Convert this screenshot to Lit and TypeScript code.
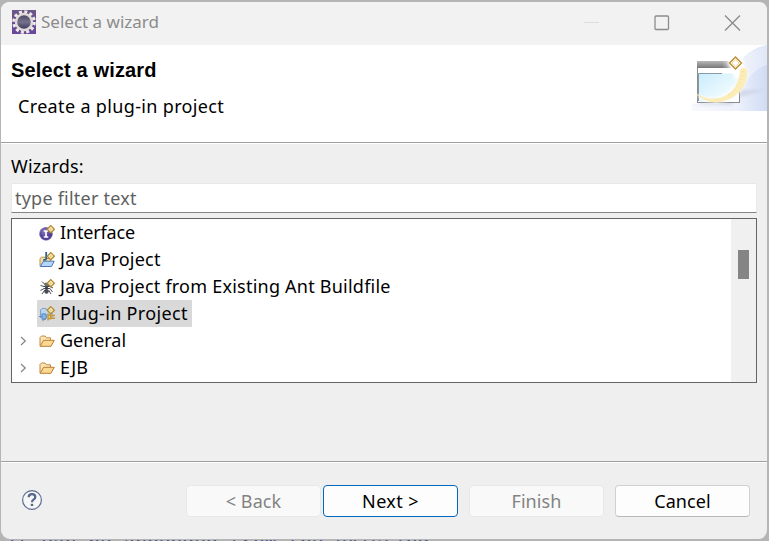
import { LitElement, html, css, svg } from "lit";
import { customElement, property } from "lit/decorators.js";

const sparkle = svg`<path d="M11.8 .6 L15.4 4.2 L11.8 7.8 L8.2 4.2Z" fill="#fffbe6" stroke="#b3892b" stroke-width="1.3"/><path d="M11.8 2.4V6M10 4.2H13.6" stroke="#e2c36c" stroke-width=".8"/>`;

const icons: Record<string, unknown> = {
  interface: svg`<defs><radialGradient id="g" cx=".4" cy=".3"><stop offset="0" stop-color="#8d7cc4"/><stop offset="1" stop-color="#4f3d94"/></radialGradient></defs>
    <circle cx="7" cy="8.8" r="6.4" fill="url(#g)" stroke="#6152a0" stroke-width=".6"/><path d="M4.7 6H9.3M7 6V12M4.7 12H9.3" stroke="#fff" stroke-width="1.7" fill="none"/>${sparkle}`,
  java: svg`<path d="M1 14V6.5L2.5 5.2H6L7 6.5H11.5V9" fill="#f5dfa3" stroke="#b7904a"/><path d="M1.2 14.5L4.5 9.2H15.2L12.5 14.5Z" fill="#b5d6fa" stroke="#4a76b8"/><path d="M7.2 0V6.5Q7 8.3 4.2 7.8" fill="none" stroke="#2b6094" stroke-width="1.8"/>${sparkle}`,
  ant: svg`<g stroke="#4b4e55" stroke-width="1" fill="none"><path d="M3 2.5L5.5 5L7 6M10 6L9 7M1.5 6.5L5 7.5H11L14 9M1.5 11.5L5 9.5H11L13.5 13M3 15L6 11M12 15L9.5 11"/></g><circle cx="7.3" cy="5.5" r="2" fill="#6a6e78"/><ellipse cx="7.5" cy="8.8" rx="1.5" ry="1.6" fill="#3b3e45"/><ellipse cx="7.5" cy="12.2" rx="2.2" ry="2.5" fill="#4a4d55"/>${sparkle}`,
  plugin: svg`<path d="M1.5 12V4L3 2.5H7L8 4H13V12" fill="#b9d5ef" stroke="#7aa2cb"/><path d="M0 10.5H3M3 8Q7.4 7 7.4 10.5T3 13Z" stroke="#5c8fc8" stroke-width="1.2" fill="#8db8e4"/><path d="M3.5 14.8L7 12.5" fill="none" stroke="#5b87bb"/><path d="M9 7.5V14.5M9 9H11.5V12.7H9M11 9.5H16M11 12.3H16" stroke="#c79835" stroke-width="1.4" fill="#f4cf74"/>${sparkle}`,
  folder: svg`<path d="M1 13V4.5L2.5 3H6L7.5 4.8H11.5V7.2" fill="#fbe5b5" stroke="#c28a3d"/><path d="M1.2 13.3L4.6 7.3H15.3L12 13.3Z" fill="#fbd993" stroke="#b97d35" stroke-linejoin="round"/>`,
};

interface Item {
  label: string;
  icon: string;
  tracking: number;
  selected?: boolean;
  expandable?: boolean;
}

const items: Item[] = [
  { label: "Interface", icon: "interface", tracking: -0.15 },
  { label: "Java Project", icon: "java", tracking: 0.25 },
  { label: "Java Project from Existing Ant Buildfile", icon: "ant", tracking: 0.23 },
  { label: "Plug-in Project", icon: "plugin", tracking: 0.33, selected: true },
  { label: "General", icon: "folder", tracking: -0.05, expandable: true },
  { label: "EJB", icon: "folder", tracking: 0.1, expandable: true },
];

@customElement("wizard-row")
class WizardRow extends LitElement {
  @property({ attribute: false }) item!: Item;
  static styles = css`
    :host { display: flex; height: 27px; align-items: center; }
    .arrow { width: 25px; display: flex; justify-content: center; box-sizing: border-box; padding-right: 3px; }
    .cell { display: flex; align-items: center; height: 27px; padding: 0 4px 0 2px; border-radius: 1px; }
    .on { background: #d9d9d9; }
    .icon { width: 16px; height: 16px; margin-right: 5px; }
    .label { white-space: pre; line-height: 27px; }
  `;
  render() {
    const it = this.item;
    return html`<div class="arrow">${it.expandable
        ? html`<svg width="7" height="10" viewBox="0 0 7 10"><path d="M1 1L5.3 5L1 9" fill="none" stroke="#858585" stroke-width="1.2"/></svg>`
        : ""}</div>
      <div class="cell ${it.selected ? "on" : ""}">
        <svg class="icon" viewBox="0 0 16 16">${icons[it.icon]}</svg><span class="label" style="letter-spacing:${it.tracking}px">${it.label}</span>
      </div>`;
  }
}

@customElement("app-root")
class AppRoot extends LitElement {
  static styles = css`
    :host { display: block; position: relative; width: 769px; height: 541px; overflow: hidden; background: #b4b4b4;
      font-family: "Noto Sans", "Open Sans", sans-serif; font-size: 18px; color: #000; }
    .code { position: absolute; left: 6px; top: 533px; font: 19.6px/22px "Liberation Mono", monospace; white-space: pre; color: #4b5790; }
    .window { position: relative; box-sizing: border-box; width: 769px; height: 540px; display: flex; flex-direction: column;
      border: solid #b5b5b5; border-width: 2px 2px 1px 1px; border-radius: 10px; overflow: hidden; background: #efefef; }
    .bar { height: 43px; background: #f2f2f2; display: flex; align-items: center; box-sizing: border-box; padding: 0 26px 3px 11px; flex: none; color: #8c8c8c; }
    .logo { width: 24px; height: 24px; margin-right: 5px; }
    .caption { flex: 1; font-size: 17px; line-height: 24px; }
    .controls { display: flex; gap: 54px; align-items: center; padding-top: 1px; }
    .head { height: 97px; background: #fff; display: flex; justify-content: space-between; flex: none; }
    .titles { display: flex; flex-direction: column; padding: 13px 0 0 10px; }
    .title { font: bold 20px/24px "Liberation Sans", sans-serif; letter-spacing: .15px; }
    .sub { line-height: 26px; padding: 11px 0 0 7px; letter-spacing: .34px; }
    .rule { height: 1px; background: #a0a0a0; border-bottom: 1px solid #fff; flex: none; }
    .body { flex: 1; padding: 9px 10px 0; display: flex; flex-direction: column; }
    .name { line-height: 26px; height: 26px; letter-spacing: .15px; }
    .filter { box-sizing: border-box; height: 30px; margin: 4px 0 0; background: #fff; border: 1px solid #e8e8e8; border-bottom-color: #858585;
      padding-left: 3px; color: #5f5f5f; line-height: 28px; letter-spacing: .22px; }
    .list { box-sizing: border-box; margin-top: 5px; height: 165px; border: 1px solid #646464; background: #fff; display: flex; }
    .rows { flex: 1; }
    .track { width: 25px; background: #f0f0f0; box-sizing: border-box; padding: 31px 0 0 7px; }
    .thumb { width: 11px; height: 29px; background: #858585; }
    .foot { height: 76px; flex: none; display: flex; align-items: center; box-sizing: border-box; padding: 0 17px 0 20px; }
    .help { flex: 1; height: 24px; }
    .btn { box-sizing: border-box; width: 135px; height: 32px; border: 1px solid #d0d0d0; border-bottom-color: #b8b8b8; border-radius: 4px; background: #fdfdfd;
      text-align: center; line-height: 30px; margin-left: 11px; letter-spacing: .1px; }
    .btn.near { margin-left: 2px; letter-spacing: .4px; }
    .off { color: #838383; background: #f9f9f9; border-color: #e8e8e8; }
    .main { border-color: #0067c0; }
  `;
  render() {
    return html`
      <div class="code">it can be appended from the existing</div>
      <div class="window">
        <div class="bar">
          <svg class="logo" viewBox="0 0 24 24"><defs><linearGradient id="a" x2="0" y2="1"><stop stop-color="#6b5787"/><stop offset="1" stop-color="#68489a"/></linearGradient><linearGradient id="b" x2="0" y2="1"><stop stop-color="#45405d"/><stop offset=".5" stop-color="#76728d"/><stop offset="1" stop-color="#3b3158"/></linearGradient></defs>
            <rect width="24" height="24" fill="url(#a)"/><circle cx="12" cy="12" r="10.2" fill="none" stroke="#eeeae8" stroke-width="3.2" stroke-dasharray="3 2.341"/><circle cx="12" cy="12" r="8" fill="url(#b)" stroke="#dedbd8" stroke-width="2.4"/></svg>
          <span class="caption">Select a wizard</span>
          <div class="controls">
            <svg width="16" height="16"><path d="M0 7.5H15" stroke="#dddddd"/></svg>
            <svg width="16" height="16"><rect x="1" y="1" width="13.5" height="13.5" rx="1" fill="none" stroke="#8c8c8c" stroke-width="1.3"/></svg>
            <svg width="17" height="16"><path d="M1 .5L16 15.5M16 .5L1 15.5" stroke="#8c8c8c" stroke-width="1.4"/></svg>
          </div>
        </div>
        <div class="head">
          <div class="titles"><div class="title">Select a wizard</div><div class="sub">Create a plug-in project</div></div>
          <svg width="75" height="66" viewBox="0 0 75 66">
            <defs>
              <linearGradient id="c" x1="0" x2="1"><stop stop-color="#f8f9fd"/><stop offset=".6" stop-color="#edf1fb"/><stop offset="1" stop-color="#d0dbf4"/></linearGradient>
              <linearGradient id="d" x2="1" y2="1"><stop stop-color="#c9edfc"/><stop offset="1" stop-color="#fff"/></linearGradient>
              <linearGradient id="e" x2="0" y2="1"><stop stop-color="#b7b7b7"/><stop offset="1" stop-color="#777"/></linearGradient>
              <linearGradient id="h"><stop offset=".55" stop-color="#fff" stop-opacity="0"/><stop offset=".9" stop-color="#fff"/></linearGradient>
              <filter id="f" x="-.3" y="-.3" width="1.6" height="1.6"><feGaussianBlur stdDeviation="1.5"/></filter>
            </defs>
            <path d="M0 66V59Q24 58 38 34Q50 5 75 0V66Z" fill="url(#c)"/>
            <path d="M36 38Q48 8 75 0V20Q60 24 52 42Z" fill="#fff" opacity=".35"/>
            <path d="M0 60L45 53L72 45H48L40 60Z" fill="#c5c8dc" opacity=".55" filter="url(#f)"/>
            <rect x="5.5" y="16.5" width="42" height="41" fill="#fff" stroke="#8b8b8b"/>
            <rect x="5" y="16" width="43" height="7" fill="url(#e)"/><rect x="6" y="15" width="44" height="9" fill="url(#h)"/>
            <rect x="6.5" y="28.5" width="40" height="28" fill="url(#d)"/><path d="M6.5 56V28.5H30" fill="none" stroke="#899ba8"/>
            <path d="M36 15H52V34H43Z" fill="#fff" filter="url(#f)"/>
            <path d="M3 49Q26 59 41 43Q48 36 48 23Q57 20 55 29Q53 49 35 56Q16 62 3 49Z" fill="#fff" opacity=".8" filter="url(#f)"/>
            <path d="M3 48Q24 60 40 46Q47 38 48 25Q51 20 55 25Q57 43 38 54Q18 63 3 48Z" fill="#fbecb8"/>
            <path d="M51 26Q50 41 36 50" fill="none" stroke="#eed58c" stroke-dasharray="1 3"/>
            <path d="M43.5 10L51 18L43.5 26L36 18Z" fill="#fff" filter="url(#f)"/>
            <path d="M43.5 12L49.5 18L43.5 24L37.5 18Z" fill="#fff7df" stroke="#b98c30" stroke-width="1.3"/><path d="M43.5 14.5L47 18L43.5 21.5L40 18Z" fill="#fff" stroke="#e8cd8b" stroke-width=".7"/>
          </svg>
        </div>
        <div class="rule"></div>
        <div class="body">
          <div class="name">Wizards:</div>
          <div class="filter">type filter text</div>
          <div class="list">
            <div class="rows">${items.map((i) => html`<wizard-row .item=${i}></wizard-row>`)}</div>
            <div class="track"><div class="thumb"></div></div>
          </div>
        </div>
        <div class="rule"></div>
        <div class="foot">
          <div class="help"><svg width="22" height="22" viewBox="0 0 22 22"><circle cx="11" cy="11" r="9.4" fill="#f6f6f6" stroke="#5c6f94" stroke-width="1.2"/><path d="M7.7 8.2Q7.7 5.2 11 5.2Q14.3 5.2 14.3 8Q14.3 9.6 12.5 10.6Q11 11.5 11 13.2" fill="none" stroke="#53658f" stroke-width="2.2"/><rect x="9.8" y="14.8" width="2.4" height="2.2" fill="#53658f"/></svg></div>
          <div class="btn off">&lt; Back</div>
          <div class="btn main near">Next &gt;</div>
          <div class="btn off">Finish</div>
          <div class="btn">Cancel</div>
        </div>
      </div>
    `;
  }
}
